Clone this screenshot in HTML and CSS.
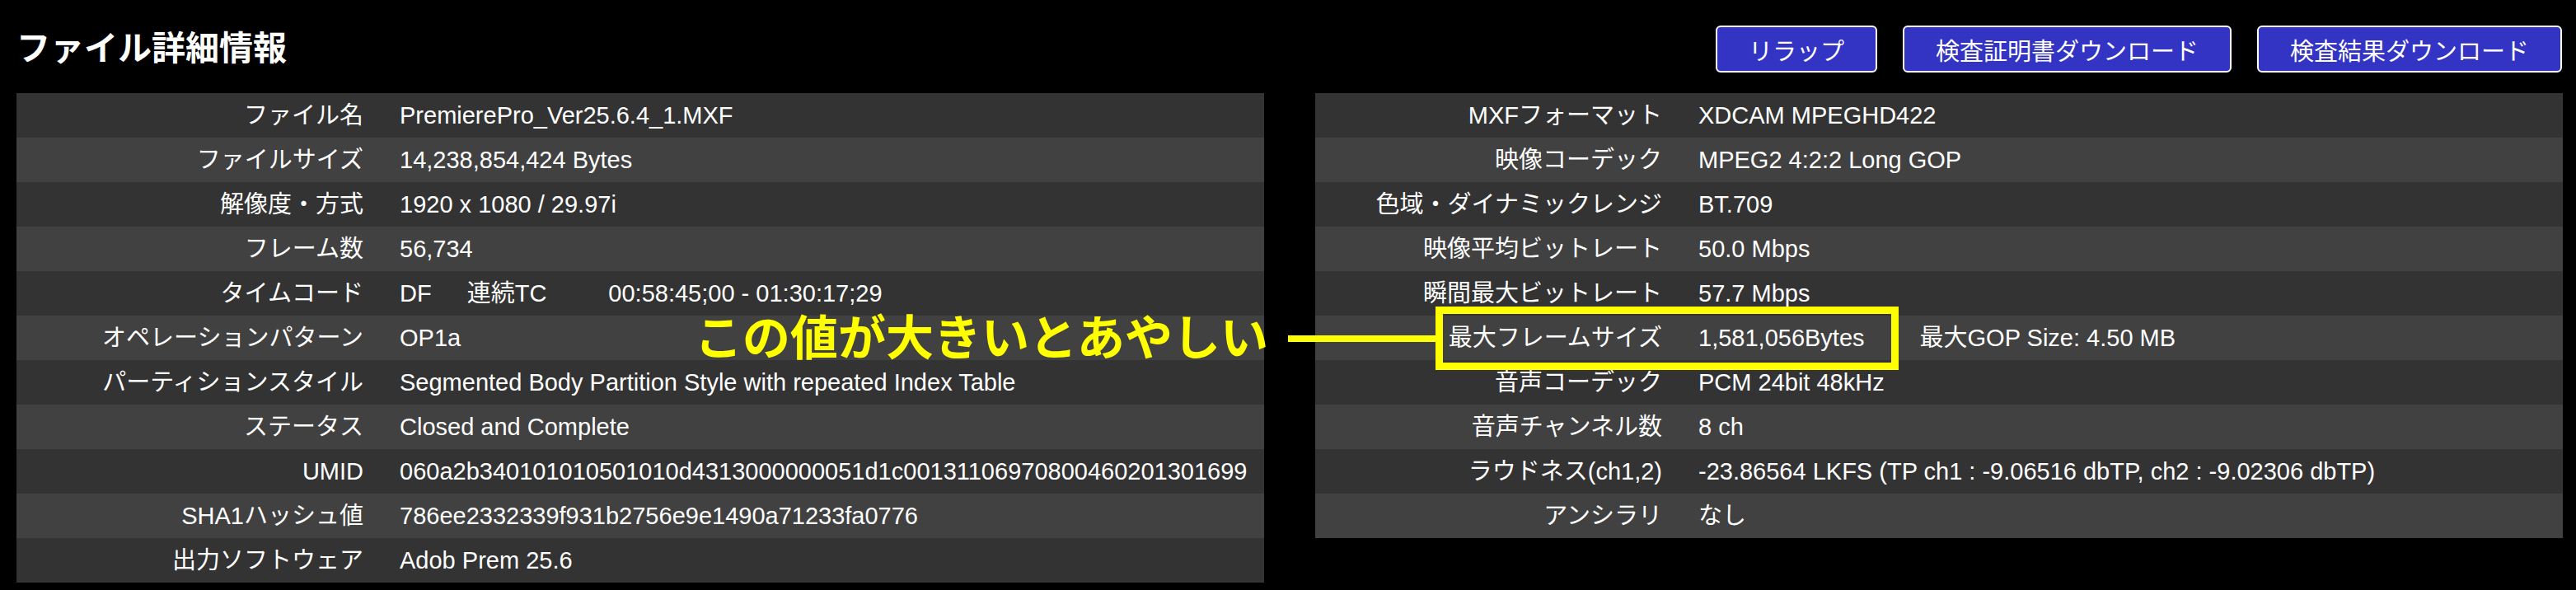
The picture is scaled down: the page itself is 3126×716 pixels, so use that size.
FILE: index.html
```html
<!DOCTYPE html>
<html lang="ja">
<head>
    <meta charset="UTF-8">
    <meta name="viewport" content="width=device-width, initial-scale=1.0">
    <title>ファイル詳細情報</title>
    <link rel="stylesheet" href="styles.css">
</head>
<body>
    <!-- ヘッダー -->
    <div class="header">
        <h1>ファイル詳細情報</h1>
        <div class="header-buttons">
            <button class="btn">リラップ</button>
            <button class="btn">検査証明書ダウンロード</button>
            <button class="btn">検査結果ダウンロード</button>
        </div>
    </div>

    <!-- 詳細テーブル -->
    <div class="tables">
        <div class="info-table">
            <div class="info-row"><div class="label">ファイル名</div><div class="value">PremierePro_Ver25.6.4_1.MXF</div></div>
            <div class="info-row"><div class="label">ファイルサイズ</div><div class="value">14,238,854,424 Bytes</div></div>
            <div class="info-row"><div class="label">解像度・方式</div><div class="value">1920 x 1080 / 29.97i</div></div>
            <div class="info-row"><div class="label">フレーム数</div><div class="value">56,734</div></div>
            <div class="info-row"><div class="label">タイムコード</div><div class="value"><span class="tc-mode">DF</span><span class="tc-type">連続TC</span><span>00:58:45;00 - 01:30:17;29</span></div></div>
            <div class="info-row"><div class="label">オペレーションパターン</div><div class="value">OP1a</div></div>
            <div class="info-row"><div class="label">パーティションスタイル</div><div class="value">Segmented Body Partition Style with repeated Index Table</div></div>
            <div class="info-row"><div class="label">ステータス</div><div class="value">Closed and Complete</div></div>
            <div class="info-row"><div class="label">UMID</div><div class="value">060a2b340101010501010d4313000000051d1c00131106970800460201301699</div></div>
            <div class="info-row"><div class="label">SHA1ハッシュ値</div><div class="value">786ee2332339f931b2756e9e1490a71233fa0776</div></div>
            <div class="info-row"><div class="label">出力ソフトウェア</div><div class="value">Adob Prem 25.6</div></div>
        </div>

        <div class="info-table">
            <div class="info-row"><div class="label">MXFフォーマット</div><div class="value">XDCAM MPEGHD422</div></div>
            <div class="info-row"><div class="label">映像コーデック</div><div class="value">MPEG2 4:2:2 Long GOP</div></div>
            <div class="info-row"><div class="label">色域・ダイナミックレンジ</div><div class="value">BT.709</div></div>
            <div class="info-row"><div class="label">映像平均ビットレート</div><div class="value">50.0 Mbps</div></div>
            <div class="info-row"><div class="label">瞬間最大ビットレート</div><div class="value">57.7 Mbps</div></div>
            <div class="info-row"><div class="label">最大フレームサイズ</div><div class="value"><span class="frame-size">1,581,056Bytes</span><span>最大GOP Size: 4.50 MB</span></div></div>
            <div class="info-row"><div class="label">音声コーデック</div><div class="value">PCM 24bit 48kHz</div></div>
            <div class="info-row"><div class="label">音声チャンネル数</div><div class="value">8 ch</div></div>
            <div class="info-row"><div class="label">ラウドネス(ch1,2)</div><div class="value">-23.86564 LKFS (TP ch1 : -9.06516 dbTP, ch2 : -9.02306 dbTP)</div></div>
            <div class="info-row"><div class="label">アンシラリ</div><div class="value">なし</div></div>
        </div>
    </div>

    <!-- 注釈 -->
    <div class="annotation">
        <span class="note-text">この値が大きいとあやしい</span>
        <span class="note-line"></span>
        <span class="note-box"></span>
    </div>
</body>
</html>
```

FILE: styles.css
```css
/* 共通 */
body {
    margin: 0;
    position: relative;
    background-color: #000;
    color: #fff;
    font-family: "Liberation Sans", "Noto Sans CJK JP", sans-serif;
}

/* ヘッダー */
.header {
    display: flex;
    justify-content: space-between;
    align-items: center;
    padding: 31px 17px 25px 20px;
}
.header h1 {
    margin: 0;
    font-size: 41px;
    font-weight: bold;
    line-height: 1;
}
.header-buttons {
    display: flex;
    gap: 31px;
}
.btn {
    height: 57px;
    padding: 0 38px;
    box-sizing: border-box;
    background-color: #3434c4;
    color: #fff;
    border: 2px solid #fff;
    border-radius: 6px;
    font-family: inherit;
    font-size: 29px;
    cursor: pointer;
}

/* テーブル */
.tables {
    display: flex;
    align-items: flex-start;
    gap: 62px;
    padding: 0 16px 0 20px;
}
.info-table {
    flex: 1;
}
.info-row {
    display: grid;
    grid-template-columns: 443px 1fr;
    height: 54px;
    line-height: 54px;
    font-size: 29px;
    background-color: #333;
    white-space: nowrap;
}
.info-row:nth-child(even) {
    background-color: #414141;
}
.label {
    text-align: right;
    padding-right: 22px;
}
.value {
    padding-left: 22px;
}
.tc-mode {
    margin-right: 43px;
}
.tc-type {
    margin-right: 75px;
}
.frame-size {
    margin-right: 67px;
}

/* 注釈 (テーブルの上に重ねる) */
.annotation {
    position: absolute;
    left: 843px;
    top: 372px;
    display: flex;
    align-items: center;
}
.note-text {
    font-size: 58px;
    font-weight: bold;
    color: #ff0;
    line-height: 1;
}
.note-line {
    width: 179px;
    height: 8px;
    margin-left: 24px;
    background-color: #ff0;
}
.note-box {
    width: 562px;
    height: 77px;
    box-sizing: border-box;
    border: 9px solid #ff0;
}
```
